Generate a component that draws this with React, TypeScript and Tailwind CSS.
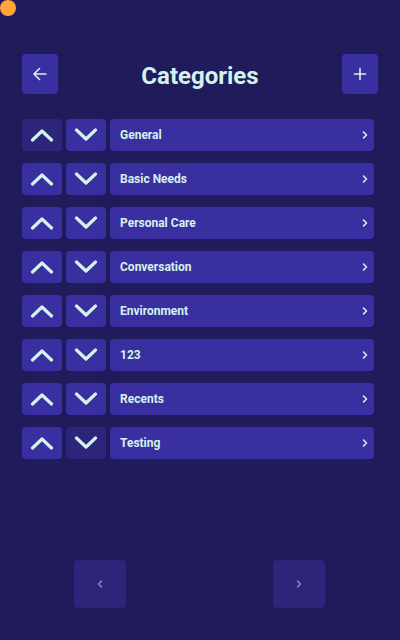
import React from "react";

const cats = ["General", "Basic Needs", "Personal Care", "Conversation", "Environment", "123", "Recents", "Testing"];

const Up = () => (
  <svg width="24" height="14" viewBox="0 0 24 14" fill="none">
    <path d="M2.5 12L12 3L21.5 12" stroke="#d4f2ec" strokeWidth="3.2" strokeLinecap="round" strokeLinejoin="round" />
  </svg>
);
const Down = () => (
  <svg width="24" height="14" viewBox="0 0 24 14" fill="none">
    <path d="M2.5 2L12 11L21.5 2" stroke="#d4f2ec" strokeWidth="3.2" strokeLinecap="round" strokeLinejoin="round" />
  </svg>
);

export default function App() {
  return (
    <div className="relative w-[400px] h-[640px] bg-[#201b5a] overflow-hidden" style={{ fontFamily: "Roboto, 'Liberation Sans', sans-serif" }}>
      <div className="absolute left-0 top-0 w-[16px] h-[16px] rounded-full bg-[#ffa53a]" />
      <div className="flex flex-col h-full px-[22px] pt-[54px]">
        <div className="flex items-center justify-between h-[40px]">
          <button className="w-[36px] h-[40px] rounded-[4px] bg-[#3a2fa0] flex items-center justify-center">
            <svg width="16" height="16" viewBox="0 0 16 16" fill="none">
              <path d="M14 8H2.5M7.5 2.5L2 8l5.5 5.5" stroke="#d4f2ec" strokeWidth="1.6" strokeLinecap="round" strokeLinejoin="round" />
            </svg>
          </button>
          <h1 className="text-[24px] font-bold text-[#d4f2ec] leading-none pt-[3px]">Categories</h1>
          <button className="w-[36px] h-[40px] rounded-[4px] bg-[#3a2fa0] flex items-center justify-center">
            <svg width="14" height="14" viewBox="0 0 14 14" fill="none">
              <path d="M7 1.5v11M1.5 7h11" stroke="#d4f2ec" strokeWidth="1.6" strokeLinecap="round" />
            </svg>
          </button>
        </div>
        <div className="flex flex-col gap-[12px] mt-[25px] pr-[4px]">
          {cats.map((c, i) => (
            <div key={c} className="flex gap-[4px] h-[32px]">
              <button className={`w-[40px] h-[32px] rounded-[4px] flex items-center justify-center ${i === 0 ? "bg-[#2c2579]" : "bg-[#3a2fa0]"}`}>
                <Up />
              </button>
              <button className={`w-[40px] h-[32px] rounded-[4px] flex items-center justify-center ${i === cats.length - 1 ? "bg-[#2c2579]" : "bg-[#3a2fa0]"}`}>
                <Down />
              </button>
              <div className="flex-1 h-[32px] rounded-[4px] bg-[#3a2fa0] flex items-center justify-between pl-[10px] pr-[4px]">
                <span className="text-[12px] font-bold text-[#d4f2ec]">{c}</span>
                <svg width="10" height="10" viewBox="0 0 10 10" fill="none">
                  <path d="M3.5 2l3 3-3 3" stroke="#d4f2ec" strokeWidth="1.6" strokeLinecap="round" strokeLinejoin="round" />
                </svg>
              </div>
            </div>
          ))}
        </div>
        <div className="flex justify-between mt-auto mb-[32px] pl-[52px] pr-[53px]">
          <button className="w-[52px] h-[48px] rounded-[4px] bg-[#2c2579] flex items-center justify-center">
            <svg width="10" height="10" viewBox="0 0 10 10" fill="none">
              <path d="M6.5 2l-3 3 3 3" stroke="#8d8cc4" strokeWidth="1.5" strokeLinecap="round" strokeLinejoin="round" />
            </svg>
          </button>
          <button className="w-[52px] h-[48px] rounded-[4px] bg-[#2c2579] flex items-center justify-center">
            <svg width="10" height="10" viewBox="0 0 10 10" fill="none">
              <path d="M3.5 2l3 3-3 3" stroke="#8d8cc4" strokeWidth="1.5" strokeLinecap="round" strokeLinejoin="round" />
            </svg>
          </button>
        </div>
      </div>
    </div>
  );
}
